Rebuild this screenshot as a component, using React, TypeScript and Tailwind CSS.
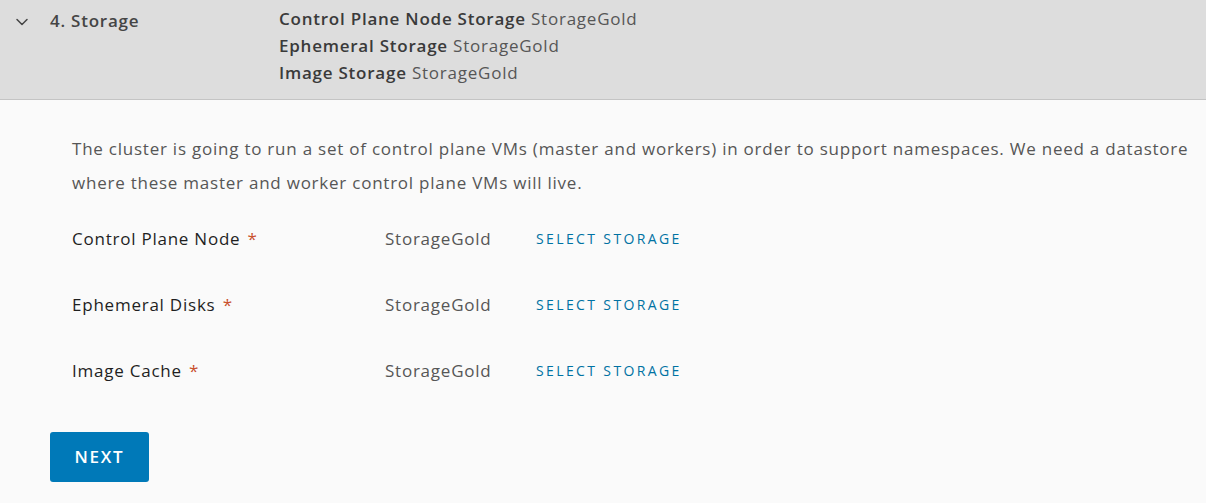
import { ChevronDown } from "lucide-react";

const rows = [
  { label: "Control Plane Node", value: "StorageGold" },
  { label: "Ephemeral Disks", value: "StorageGold" },
  { label: "Image Cache", value: "StorageGold" },
];

export default function App() {
  return (
    <div className="w-[1206px] h-[503px] bg-[#fafafa] overflow-hidden font-['Open_Sans','Noto_Sans',sans-serif] text-[17px] tracking-[0.045em]">
      {/* step header */}
      <div className="h-[100px] bg-[#dddddd] border-b border-[#c4c4c4] flex">
        <div className="w-[279px] flex items-start pt-[9px] pl-[12px]">
          <ChevronDown className="w-[20px] h-[20px] mt-[3px] text-[#454545]" strokeWidth={1.8} />
          <span className="ml-[18px] font-semibold text-[#454545] leading-[24px]">4. Storage</span>
        </div>
        <div className="pt-[5px] leading-[27px] text-[#565656]">
          <div>
            <span className="font-semibold text-[#3a3a3a]">Control Plane Node Storage</span> StorageGold
          </div>
          <div>
            <span className="font-semibold text-[#3a3a3a]">Ephemeral Storage</span> StorageGold
          </div>
          <div>
            <span className="font-semibold text-[#3a3a3a]">Image Storage</span> StorageGold
          </div>
        </div>
      </div>

      {/* content */}
      <div className="pl-[72px] pt-[32px]">
        <p className="leading-[34px] text-[#565656] pr-[14px]">
          The cluster is going to run a set of control plane VMs (master and workers) in order to support namespaces. We need a datastore
          where these master and worker control plane VMs will live.
        </p>
        <div className="mt-[28px] flex flex-col">
          {rows.map((r) => (
            <div key={r.label} className="h-[66px] flex items-start">
              <div className="w-[313px] leading-[22px] text-[#1f1f1f]">
                {r.label} <span className="text-[#c9502d] ml-[2px]">*</span>
              </div>
              <div className="w-[151px] leading-[22px] text-[#565656]">{r.value}</div>
              <div className="text-[14px] leading-[22px] font-medium tracking-[0.17em] text-[#0072a3]">SELECT STORAGE</div>
            </div>
          ))}
        </div>
      </div>

      <div className="pl-[50px] mt-[6px]">
        <button className="w-[99px] h-[50px] rounded-[3px] bg-[#0079b8] text-white text-[17px] font-semibold tracking-[0.1em]">
          NEXT
        </button>
      </div>
    </div>
  );
}
